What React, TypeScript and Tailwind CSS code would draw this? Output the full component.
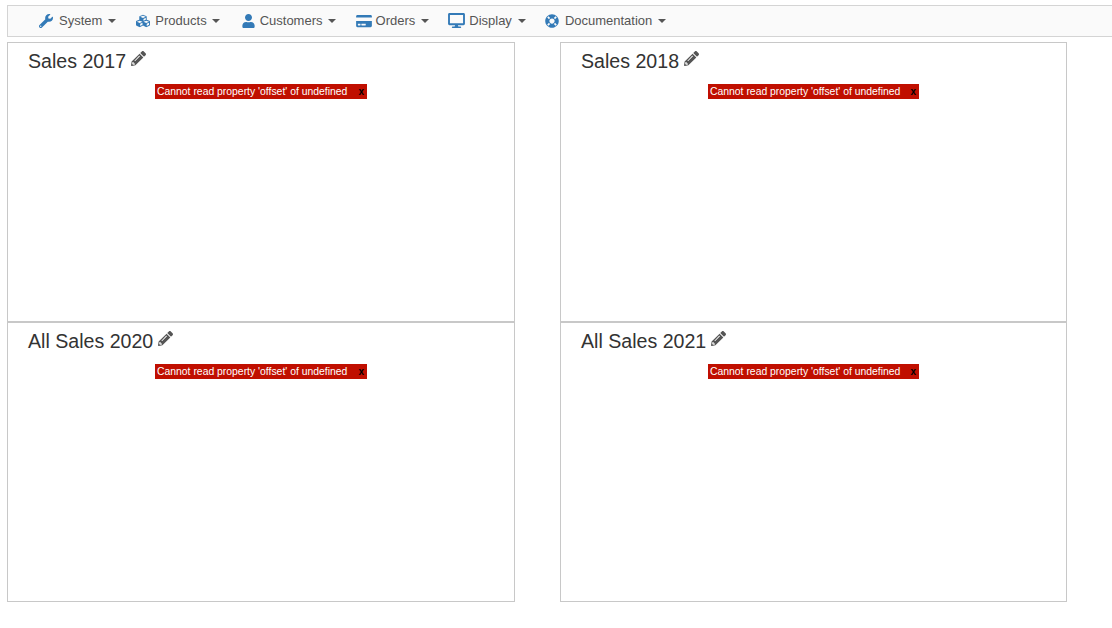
import React from "react";
import { FaCreditCard, FaCubes, FaDesktop, FaLifeRing, FaPencilAlt, FaUser, FaWrench } from "react-icons/fa";

const menu = [
  { label: "System", icon: FaWrench, iconClass: "w-[14px] h-[14px] mr-[6px]", pad: "ml-0", caret: "ml-[6px]" },
  { label: "Products", icon: FaCubes, iconClass: "w-[14px] h-[14px] mr-[5px]", pad: "ml-[20px]", caret: "ml-[5px]" },
  { label: "Customers", icon: FaUser, iconClass: "w-[13px] h-[14px] mr-[5px]", pad: "ml-[22px]", caret: "ml-[5px]" },
  { label: "Orders", icon: FaCreditCard, iconClass: "w-[16px] h-[14px] mr-[4px]", pad: "ml-[20px]", caret: "ml-[6px]" },
  { label: "Display", icon: FaDesktop, iconClass: "w-[17px] h-[15px] mr-[4px]", pad: "ml-[19px]", caret: "ml-[6px]" },
  { label: "Documentation", icon: FaLifeRing, iconClass: "w-[14px] h-[14px] mr-[6px]", pad: "ml-[19px]", caret: "ml-[6px]" },
];

function ChartPanel({ title, barWidth }: { title: string; barWidth: string }) {
  return (
    <div className="h-[280px] border border-[#c8c8c8] bg-white pl-[20px] pt-[5px]">
      <div className="flex items-center gap-[5px] h-[26px] text-[19.6px] leading-[26px] text-[#333]">
        <span>{title}</span>
        <FaPencilAlt className="text-[15px] text-[#555] -mt-[5px]" />
      </div>
      <div className={`flex items-center justify-between ${barWidth} h-[15px] mt-[10px] ml-[127px] bg-[#c00f00] pl-[2px] pr-[3px] text-[10.4px] leading-[15px] text-white`}>
        <span className="whitespace-pre">Cannot read property 'offset' of undefined</span>
        <span className="font-bold text-[10px] text-black leading-[15px]">x</span>
      </div>
    </div>
  );
}

export default function App() {
  return (
    <div className="h-[628px] overflow-hidden bg-white pt-[5px] pl-[7px] font-['Liberation_Sans',Arial,sans-serif]">
      <nav className="flex items-center h-[32px] border border-r-0 border-[#d4d4d4] bg-[#fafafa] pl-[31px] pb-px text-[13px] text-[#555]">
        {menu.map((item) => (
          <div key={item.label} className={`flex items-center ${item.pad}`}>
            <item.icon className={`${item.iconClass} text-[#337ab7]`} />
            <span>{item.label}</span>
            <span className={`${item.caret} border-x-[4px] border-t-[4px] border-x-transparent border-t-[#555]`} />
          </div>
        ))}
      </nav>
      <div className="mt-[5px] grid grid-cols-[508px_507px] gap-x-[45px]">
        <ChartPanel title="Sales 2017" barWidth="w-[212px]" />
        <ChartPanel title="Sales 2018" barWidth="w-[211px]" />
        <ChartPanel title="All Sales 2020" barWidth="w-[212px]" />
        <ChartPanel title="All Sales 2021" barWidth="w-[211px]" />
      </div>
    </div>
  );
}
